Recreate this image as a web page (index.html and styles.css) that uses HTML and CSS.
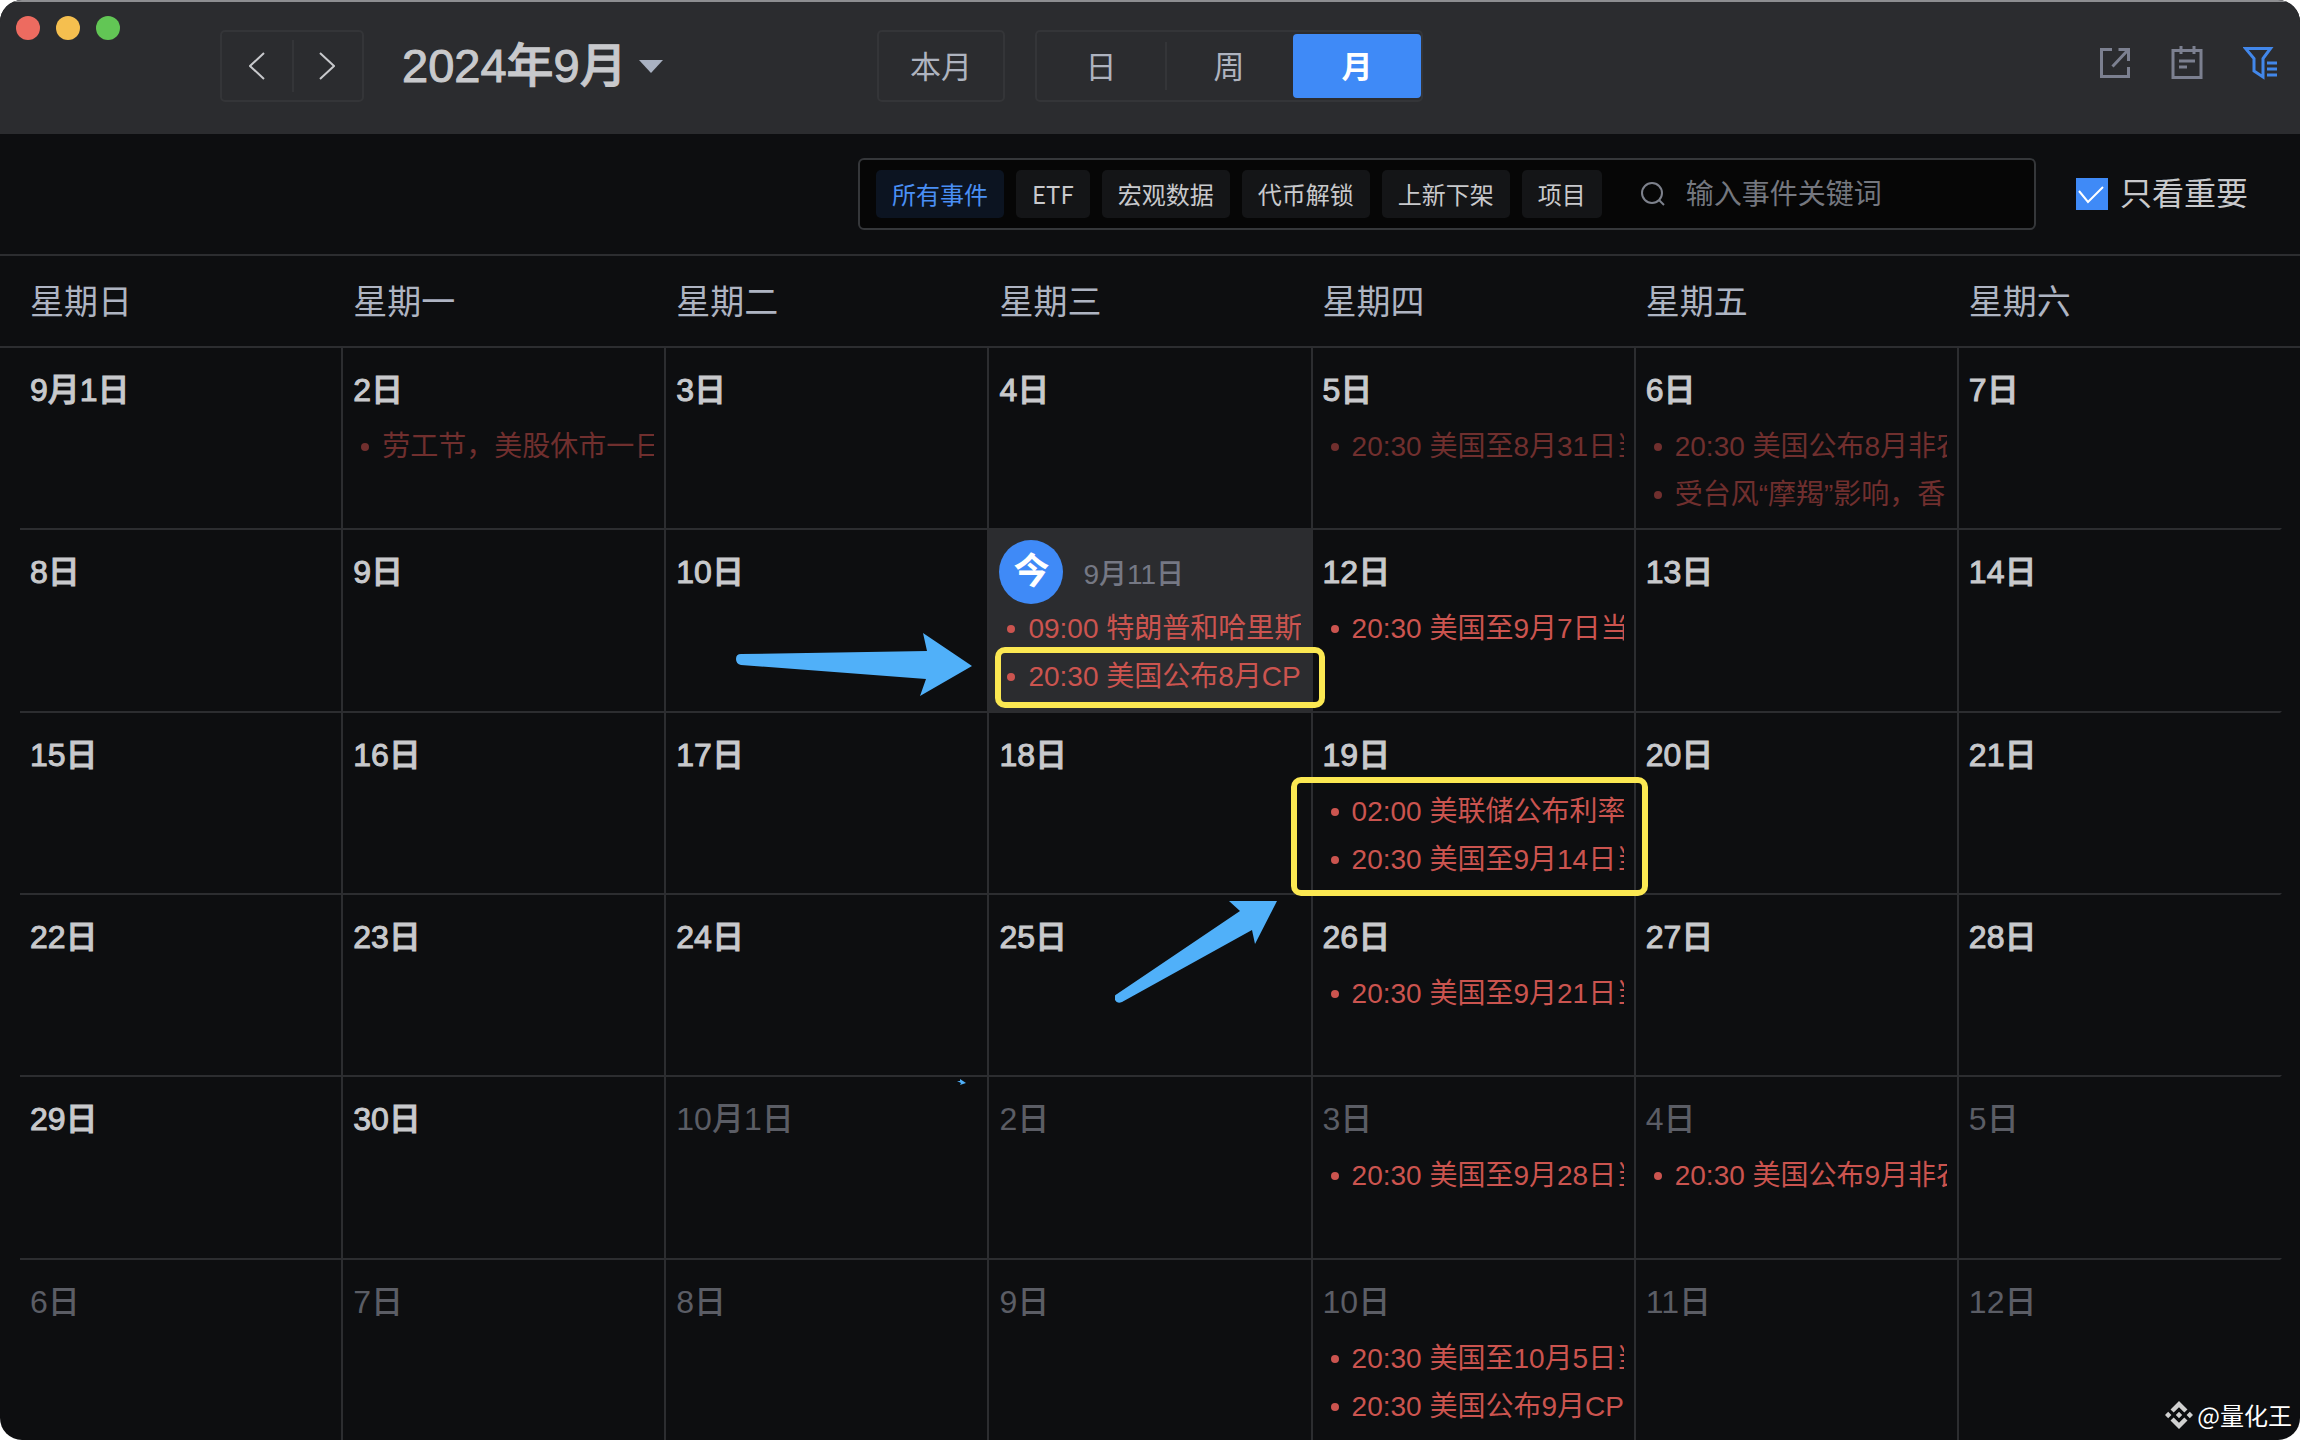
FILE: index.html
```html
<!DOCTYPE html>
<html lang="zh-CN">
<head>
<meta charset="utf-8">
<meta name="viewport" content="width=device-width, initial-scale=1">
<title>2024年9月</title>
<link rel="stylesheet" href="styles.css">
</head>
<body>
<div class="window">
  <header class="titlebar">
    <div class="titlebar-left">
      <div class="lights">
        <span class="light light-close"></span>
        <span class="light light-min"></span>
        <span class="light light-max"></span>
      </div>
      <div class="pager">
        <button type="button" aria-label="上个月"><svg width="16" height="28" viewBox="0 0 16 28"><path d="M15 1 1 14 15 27"/></svg></button>
        <button type="button" aria-label="下个月"><svg width="16" height="28" viewBox="0 0 16 28"><path d="M1 1 15 14 1 27"/></svg></button>
      </div>
      <div class="month-picker">
        <select aria-label="选择月份"><option>2024年9月</option></select>
        <svg class="caret" width="24" height="13" viewBox="0 0 24 13"><path d="M0 0H24L12 13Z"/></svg>
      </div>
    </div>
    <div class="views">
      <button type="button" class="btn-current">本月</button>
      <div class="segments">
        <button type="button">日</button>
        <button type="button">周</button>
        <button type="button" class="active">月</button>
      </div>
    </div>
    <div class="tools">
      <button type="button" aria-label="分享"><svg width="32" height="34" viewBox="0 0 32 34"><path d="M13 3.500H2.500V30.500H29.500V21M19.500 3.500H29.500V15M29 4 13.500 20.500"/></svg></button>
      <button type="button" aria-label="日程"><svg width="32" height="34" viewBox="0 0 32 34"><path d="M2 4.500H30V31.500H2ZM10 0V8M23 0V8M8 15H24M8 21H16"/></svg></button>
      <button type="button" class="on" aria-label="筛选"><svg width="34" height="34" viewBox="0 0 34 34"><path d="M2.500 2.500H27.500L20 12.500V31L11 25V12.500ZM24 17H34M24 23H34M24 29H34"/></svg></button>
    </div>
  </header>

  <div class="filters">
    <div class="search-box">
      <button type="button" class="tag active">所有事件</button>
      <button type="button" class="tag">ETF</button>
      <button type="button" class="tag">宏观数据</button>
      <button type="button" class="tag">代币解锁</button>
      <button type="button" class="tag">上新下架</button>
      <button type="button" class="tag">项目</button>
      <label class="search">
        <svg width="26" height="26" viewBox="0 0 26 26"><circle cx="12" cy="12" r="10"/><path d="M19 19 24 24"/></svg>
        <input type="text" placeholder="输入事件关键词" aria-label="搜索">
      </label>
    </div>
    <label class="important">
      <span class="tick"><input type="checkbox" checked><svg width="32" height="32" viewBox="0 0 32 32"><path d="M3 13 12 24 27 9"/></svg></span>
      只看重要
    </label>
  </div>

  <table class="calendar">
    <thead>
      <tr><th>星期日</th><th>星期一</th><th>星期二</th><th>星期三</th><th>星期四</th><th>星期五</th><th>星期六</th></tr>
    </thead>
    <tbody>
      <tr>
        <td><div class="day">9月1日</div></td>
        <td><div class="day">2日</div><ul class="past"><li>劳工节，美股休市一日</li></ul></td>
        <td><div class="day">3日</div></td>
        <td><div class="day">4日</div></td>
        <td><div class="day">5日</div><ul class="past"><li>20:30 美国至8月31日当</li></ul></td>
        <td><div class="day">6日</div><ul class="past"><li>20:30 美国公布8月非农</li><li>受台风“摩羯”影响，香</li></ul></td>
        <td><div class="day">7日</div></td>
      </tr>
      <tr>
        <td><div class="day">8日</div></td>
        <td><div class="day">9日</div></td>
        <td><div class="day">10日</div>
          <svg class="arrow arrow-cpi" width="236" height="64" viewBox="0 0 236 64"><path d="M5 21 191 18 187 0 236 33 184 63 190 46 5 32Q0 31 0 26T5 21Z"/></svg>
        </td>
        <td class="today"><div class="day"><span class="badge">今</span><span class="date">9月11日</span></div><ul><li>09:00 特朗普和哈里斯</li><li>20:30 美国公布8月CP</li></ul><span class="mark mark-cpi"></span></td>
        <td><div class="day">12日</div><ul><li>20:30 美国至9月7日当</li></ul></td>
        <td><div class="day">13日</div></td>
        <td><div class="day">14日</div></td>
      </tr>
      <tr>
        <td><div class="day">15日</div></td>
        <td><div class="day">16日</div></td>
        <td><div class="day">17日</div></td>
        <td><div class="day">18日</div></td>
        <td><div class="day">19日</div><ul><li>02:00 美联储公布利率</li><li>20:30 美国至9月14日当</li></ul><span class="mark mark-rate"></span></td>
        <td><div class="day">20日</div></td>
        <td><div class="day">21日</div></td>
      </tr>
      <tr>
        <td><div class="day">22日</div></td>
        <td><div class="day">23日</div></td>
        <td><div class="day">24日</div></td>
        <td><div class="day">25日</div>
          <svg class="arrow arrow-rate" width="162" height="102" viewBox="0 0 162 102"><path d="M2 93 125 10 114 0H162L140 43 137 29 7 101Q2 103 0 99T2 93Z"/></svg>
        </td>
        <td><div class="day">26日</div><ul><li>20:30 美国至9月21日当</li></ul></td>
        <td><div class="day">27日</div></td>
        <td><div class="day">28日</div></td>
      </tr>
      <tr>
        <td><div class="day">29日</div></td>
        <td><div class="day">30日</div></td>
        <td class="other"><div class="day">10月1日</div>
          <svg class="arrow arrow-mini" width="9" height="6" viewBox="0 0 9 6"><path d="M0 2 3 2 3 0 9 4 3 6 4 4Z"/></svg>
        </td>
        <td class="other"><div class="day">2日</div></td>
        <td class="other"><div class="day">3日</div><ul><li>20:30 美国至9月28日当</li></ul></td>
        <td class="other"><div class="day">4日</div><ul><li>20:30 美国公布9月非农</li></ul></td>
        <td class="other"><div class="day">5日</div></td>
      </tr>
      <tr>
        <td class="other"><div class="day">6日</div></td>
        <td class="other"><div class="day">7日</div></td>
        <td class="other"><div class="day">8日</div></td>
        <td class="other"><div class="day">9日</div></td>
        <td class="other"><div class="day">10日</div><ul><li>20:30 美国至10月5日当</li><li>20:30 美国公布9月CP</li></ul></td>
        <td class="other"><div class="day">11日</div></td>
        <td class="other"><div class="day">12日</div></td>
      </tr>
    </tbody>
  </table>

  <div class="watermark">
    <svg width="28" height="28" viewBox="0 0 28 28"><path d="M14 0 22.500 8.500 19.300 11.600 14 6.300 8.700 11.600 5.500 8.500ZM14 28 22.500 19.500 19.300 16.400 14 21.700 8.700 16.400 5.500 19.500ZM3.200 10.800 6.400 14 3.200 17.200 0 14ZM24.800 10.800 28 14 24.800 17.200 21.600 14ZM14 10.800 17.200 14 14 17.200 10.800 14Z"/></svg>
    <span>@量化王</span>
  </div>
</div>
</body>
</html>
```

FILE: styles.css
```css
* { box-sizing: border-box; }

body {
  margin: 0;
  background: #fff;
  font-family: "Liberation Sans", "Noto Sans CJK SC", sans-serif;
  color: #c8c9cc;
}

button, select, input {
  margin: 0;
  padding: 0;
  border: 0;
  background: none;
  color: inherit;
  font: inherit;
}

svg { display: block; flex: none; }

.window {
  position: relative;
  display: flex;
  flex-direction: column;
  min-height: 100vh;
  overflow: hidden;
  border-radius: 22px;
  background: #0d0e10;
}

/* title bar */
.titlebar {
  display: grid;
  grid-template-columns: 1fr auto 1fr;
  height: 134px;
  border-top: 2px solid #8d8e91;
  background: #2b2c2f;
}

.titlebar-left { display: flex; align-items: flex-start; }

.lights { display: flex; gap: 16px; padding: 14px 0 0 16px; }
.light { width: 24px; height: 24px; border-radius: 50%; }
.light-close { background: #ed6b60; }
.light-min { background: #f5bf4f; }
.light-max { background: #62c655; }

.pager {
  display: flex;
  width: 144px;
  height: 72px;
  margin: 28px 38px 0 100px;
  border: 2px solid #343538;
  border-radius: 5px;
}
.pager button { flex: 1; display: flex; align-items: center; justify-content: center; }
.pager button + button { position: relative; }
.pager button + button::before,
.segments button:nth-child(2)::before {
  content: "";
  position: absolute;
  left: 0;
  top: 8px;
  bottom: 8px;
  width: 2px;
  background: #343538;
}
.pager path { fill: none; stroke: #c8c9cc; stroke-width: 2; }

.month-picker { display: flex; align-items: center; gap: 12px; height: 72px; margin-top: 28px; }
.month-picker select { appearance: none; font-size: 47px; font-weight: 500; line-height: 64px; -webkit-text-stroke: 1px currentColor; }
.caret { fill: #a9b1c1; }

.views { display: flex; gap: 30px; padding-top: 28px; font-size: 31px; color: #aeb3bf; }
.views button { padding-bottom: 3px; }
.btn-current { width: 128px; height: 72px; border: 2px solid #343538; border-radius: 5px; }
.segments { display: flex; height: 72px; padding: 2px 0; border: 2px solid #343538; border-radius: 5px; }
.segments button { position: relative; width: 128px; }
.segments .active { border-radius: 4px; background: #3f8af7; color: #fff; font-weight: 700; }

.tools { display: flex; justify-content: flex-end; gap: 40px; padding: 44px 25px 0 0; }
.tools button { width: 32px; height: 34px; }
.tools path { fill: none; stroke: #7c8090; stroke-width: 3; }
.tools .on path { stroke: #4287ea; }

/* filter row */
.filters {
  display: flex;
  align-items: center;
  justify-content: flex-end;
  gap: 40px;
  height: 122px;
  padding: 0 52px 0 20px;
  border-bottom: 2px solid #2c2d30;
}
.search-box {
  display: flex;
  flex: 0 1 1178px;
  align-items: center;
  gap: 12px;
  min-width: 0;
  height: 72px;
  padding: 0 16px;
  border: 2px solid #35373a;
  border-radius: 6px;
  background: #060606;
}
.tag {
  flex: none;
  height: 48px;
  padding: 0 16px;
  border-radius: 5px;
  background: #141517;
  font-family: "Noto Sans CJK SC", sans-serif;
  font-size: 24px;
  line-height: 48px;
  white-space: nowrap;
}
.tag.active { background: #0c1421; color: #4a8ff5; }
.search { display: flex; flex: 1; align-items: center; gap: 20px; min-width: 0; padding-left: 26px; }
.search svg { fill: none; stroke: #7d818c; stroke-width: 2; }
.search input { flex: 1; width: 0; min-width: 0; height: 48px; padding-top: 2px; font-size: 28px; outline: 0; }
.search input::placeholder { color: #74777f; opacity: 1; }

.important { display: flex; flex: none; align-items: center; gap: 12px; font-size: 32px; line-height: 48px; white-space: nowrap; }
.tick { position: relative; width: 32px; height: 32px; }
.tick input { display: block; appearance: none; width: 32px; height: 32px; background: #3f8af7; }
.tick svg { position: absolute; inset: 0; pointer-events: none; fill: none; stroke: #fff; stroke-width: 2; }

/* calendar */
.calendar { display: flex; flex: 1; flex-direction: column; }
.calendar thead { display: block; padding: 0 18px 0 20px; border-bottom: 2px solid #2c2d30; }
.calendar tr { display: grid; grid-template-columns: repeat(7, minmax(0, 1fr)); }
.calendar th {
  height: 90px;
  padding: 1px 10px 0;
  color: #aeb4c2;
  font-size: 34px;
  font-weight: 400;
  line-height: 90px;
  text-align: left;
}
.calendar tbody {
  display: grid;
  flex: 1;
  grid-template-rows: repeat(6, 1fr);
  margin-top: -2px;
  padding: 0 18px 0 20px;
}
.calendar td {
  position: relative;
  min-height: 182px;
  padding: 10px 10px 0;
  border-top: 2px solid #2c2d30;
  border-right: 2px solid #2c2d30;
}
.calendar td:last-child { border-right-color: transparent; }

.day { display: flex; align-items: center; height: 64px; padding-bottom: 6px; font-size: 32px; font-weight: 500; -webkit-text-stroke: 1px currentColor; }
.other .day { color: #5b5d65; -webkit-text-stroke: 0; }
.calendar .today { background: #2b2c2f; }
.today .day { padding: 0; -webkit-text-stroke: 0; }
.badge {
  width: 64px;
  height: 64px;
  margin-right: 20px;
  border-radius: 50%;
  background: #3f8af7;
  color: #fff;
  font-size: 36px;
  font-weight: 700;
  line-height: 64px;
  text-align: center;
}
.date { color: #757884; font-size: 28px; }

.calendar ul { margin: 0; padding: 1px 0 0 8px; list-style: none; color: #cb544f; }
.calendar .past { color: #702f2e; }
.calendar li {
  display: flex;
  align-items: center;
  gap: 13px;
  height: 48px;
  overflow: hidden;
  font-size: 28px;
  line-height: 48px;
  white-space: nowrap;
}
.calendar li::before {
  content: "";
  flex: none;
  width: 8px;
  height: 8px;
  border-radius: 50%;
  background: currentColor;
}

/* highlights drawn over the calendar */
.mark { position: absolute; z-index: 1; border: 6px solid #fbe852; border-radius: 10px; }
.mark-cpi { left: 6px; right: -14px; top: 117px; height: 61px; }
.mark-rate { left: -22px; right: -14px; top: 64px; height: 119px; }
.arrow { position: absolute; z-index: 1; fill: #50b0f9; }
.arrow-cpi { left: 70px; top: 103px; }
.arrow-rate { left: 126px; top: 6px; }
.arrow-mini { left: 291px; top: 2px; }

.watermark {
  position: absolute;
  right: 8px;
  bottom: 7px;
  display: flex;
  align-items: center;
  gap: 4px;
  color: #fff;
  font-family: "Noto Sans CJK SC", sans-serif;
  font-size: 24px;
  line-height: 36px;
}
.watermark svg { fill: #d0d0d0; }
```
